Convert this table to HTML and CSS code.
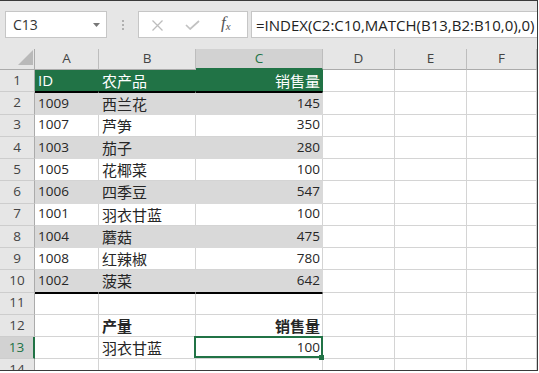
FILE: index.html
```html
<!DOCTYPE html>
<html lang="zh">
<head>
<meta charset="utf-8">
<title>INDEX MATCH</title>
<link rel="stylesheet" href="styles.css">
</head>
<body>
<div class="app">
  <div class="bar">
    <div class="namebox">
      <span class="nb-text">C13</span>
      <svg class="nb-arrow" width="7" height="4" viewBox="0 0 7 4"><path d="M0 0H7L3.5 4Z" fill="#777"/></svg>
    </div>
    <div class="grip"><i></i><i></i><i></i></div>
    <div class="fxbtns">
      <svg class="ic-x" width="11" height="11" viewBox="0 0 11 11"><path d="M0.5 0.5L10.5 10.5M10.5 0.5L0.5 10.5" stroke="#bdbdbd" stroke-width="1.3" fill="none"/></svg>
      <svg class="ic-check" width="15" height="10" viewBox="0 0 15 10"><path d="M1 5L5.2 9L14 1" stroke="#c2c2c2" stroke-width="1.7" fill="none"/></svg>
      <span class="fx"><i>f</i><sub>x</sub></span>
    </div>
    <div class="formula">=INDEX(C2:C10,MATCH(B13,B2:B10,0),0)</div>
  </div>
  <div class="sheet">
    <div class="corner"><svg width="15" height="15" viewBox="0 0 15 15"><path d="M0 15L15 0V15Z" fill="#b9b9b9"/></svg></div>
    <div class="ch">A</div><div class="ch">B</div><div class="ch sel">C</div><div class="ch">D</div><div class="ch">E</div><div class="ch">F</div>

    <div class="rh">1</div><div class="c g bb big">ID</div><div class="c g bb zh">农产品</div><div class="c g bb zh r">销售量</div><div class="c"></div><div class="c"></div><div class="c"></div>
    <div class="rh">2</div><div class="c s tb">1009</div><div class="c s tb zh">西兰花</div><div class="c s tb r">145</div><div class="c"></div><div class="c"></div><div class="c"></div>
    <div class="rh">3</div><div class="c">1007</div><div class="c zh">芦笋</div><div class="c r">350</div><div class="c"></div><div class="c"></div><div class="c"></div>
    <div class="rh">4</div><div class="c s">1003</div><div class="c s zh">茄子</div><div class="c s r">280</div><div class="c"></div><div class="c"></div><div class="c"></div>
    <div class="rh">5</div><div class="c">1005</div><div class="c zh">花椰菜</div><div class="c r">100</div><div class="c"></div><div class="c"></div><div class="c"></div>
    <div class="rh">6</div><div class="c s">1006</div><div class="c s zh">四季豆</div><div class="c s r">547</div><div class="c"></div><div class="c"></div><div class="c"></div>
    <div class="rh">7</div><div class="c">1001</div><div class="c zh">羽衣甘蓝</div><div class="c r">100</div><div class="c"></div><div class="c"></div><div class="c"></div>
    <div class="rh">8</div><div class="c s">1004</div><div class="c s zh">蘑菇</div><div class="c s r">475</div><div class="c"></div><div class="c"></div><div class="c"></div>
    <div class="rh">9</div><div class="c">1008</div><div class="c zh">红辣椒</div><div class="c r">780</div><div class="c"></div><div class="c"></div><div class="c"></div>
    <div class="rh">10</div><div class="c s bb">1002</div><div class="c s bb zh">菠菜</div><div class="c s bb r">642</div><div class="c"></div><div class="c"></div><div class="c"></div>
    <div class="rh">11</div><div class="c tb"></div><div class="c tb"></div><div class="c tb"></div><div class="c"></div><div class="c"></div><div class="c"></div>
    <div class="rh">12</div><div class="c"></div><div class="c zh b">产量</div><div class="c zh b r">销售量</div><div class="c"></div><div class="c"></div><div class="c"></div>
    <div class="rh sel">13</div><div class="c"></div><div class="c zh">羽衣甘蓝</div><div class="c r act">100<span class="sel-box"></span></div><div class="c"></div><div class="c"></div><div class="c"></div>
    <div class="rh">14</div><div class="c"></div><div class="c"></div><div class="c"></div><div class="c"></div><div class="c"></div><div class="c"></div>
  </div>
</div>
</body>
</html>
```
FILE: styles.css
```css
html, body {
  margin: 0;
  padding: 0;
  background: #ffffff;
}

.app {
  box-sizing: border-box;
  width: 538px;
  height: 371px;
  border-top: 1px solid #3a3a3a;
  border-right: 1px solid #3a3a3a;
  border-bottom: 1px solid #3a3a3a;
  overflow: hidden;
  background: #ffffff;
  font-family: "Open Sans", "Noto Sans CJK SC", sans-serif;
}

/* ---------- formula bar ---------- */
.bar {
  height: 48px;
  box-sizing: border-box;
  padding-top: 10px;
  background: #e6e6e6;
  display: flex;
  align-items: flex-start;
}

.namebox {
  box-sizing: border-box;
  margin-left: 5px;
  width: 102px;
  height: 27px;
  background: #ffffff;
  border: 1px solid #c6c6c6;
  display: flex;
  align-items: center;
  justify-content: space-between;
  padding: 0 6px 0 7px;
}

.nb-text {
  font-size: 14px;
  color: #333333;
  line-height: 1;
}

.nb-arrow {
  margin-top: 1px;
}

.grip {
  width: 31px;
  height: 27px;
  display: flex;
  flex-direction: column;
  align-items: center;
  justify-content: center;
  gap: 2px;
  padding-left: 1px;
  box-sizing: border-box;
}

.grip i {
  display: block;
  width: 2px;
  height: 2px;
  background: #b0b0b0;
}

.fxbtns {
  box-sizing: border-box;
  width: 110px;
  height: 27px;
  background: #ffffff;
  border: 1px solid #c6c6c6;
  display: flex;
  align-items: center;
  padding-left: 13px;
}

.ic-x {
  margin-top: 1px;
}

.ic-check {
  margin-left: 22px;
  margin-top: 1px;
}

.fx {
  margin-left: 21px;
  font-family: "Liberation Serif", serif;
  font-size: 17px;
  color: #555555;
  line-height: 1;
  margin-top: -3px;
}

.fx sub {
  font-size: 11px;
  font-style: italic;
  vertical-align: -2px;
}

.formula {
  box-sizing: border-box;
  flex: 1;
  margin-left: 3px;
  height: 27px;
  background: #ffffff;
  border: 1px solid #c6c6c6;
  border-right: none;
  padding-left: 4px;
  display: flex;
  align-items: center;
  font-size: 15px;
  color: #222222;
  white-space: nowrap;
}

/* ---------- sheet ---------- */
.sheet {
  display: grid;
  grid-template-columns: 35px 64px 97px 127px 72px 72px 1fr;
  grid-template-rows: 21px repeat(14, 22.25px);
}

.corner {
  box-sizing: border-box;
  background: #e6e6e6;
  border-right: 1px solid #ababab;
  border-bottom: 1px solid #ababab;
  display: flex;
  justify-content: flex-end;
  align-items: flex-end;
  padding: 0 1px 4px 0;
}

.corner svg {
  display: block;
}

.ch {
  box-sizing: border-box;
  background: #e6e6e6;
  border-right: 1px solid #bdbdbd;
  border-bottom: 1px solid #ababab;
  display: flex;
  align-items: center;
  justify-content: center;
  font-size: 13.5px;
  color: #444444;
  line-height: 1;
}

.ch.sel {
  background: #d2d2d2;
  color: #217346;
  border-bottom: 2px solid #217346;
}

.rh {
  box-sizing: border-box;
  background: #e6e6e6;
  border-right: 1px solid #ababab;
  border-bottom: 1px solid #cdcdcd;
  display: flex;
  align-items: center;
  justify-content: center;
  font-size: 13.5px;
  color: #444444;
  line-height: 1;
}

.rh.sel {
  background: #d2d2d2;
  color: #217346;
  border-right: 2px solid #217346;
}

.c {
  box-sizing: border-box;
  border-right: 1px solid #d4d4d4;
  border-bottom: 1px solid #d4d4d4;
  padding: 0 2px 0 3px;
  display: flex;
  align-items: center;
  font-size: 13.5px;
  line-height: 1;
  color: #262626;
  white-space: nowrap;
  overflow: hidden;
  min-width: 0;
}

.c.big {
  font-size: 15px;
}

.c.zh {
  font-family: "Noto Sans CJK SC", sans-serif;
  font-size: 15px;
}

.c.r {
  justify-content: flex-end;
}

.c.b {
  font-weight: 700;
}

.c.g {
  background: #217346;
  border-color: #217346;
  color: #ffffff;
}

.c.s {
  background: #d9d9d9;
  border-color: #d9d9d9;
}

.c.bb {
  border-bottom-color: #000000;
}

.c.tb {
  border-top: 1px solid #000000;
}

.c.act {
  position: relative;
  overflow: visible;
}

.sel-box {
  position: absolute;
  top: -1px;
  bottom: 0;
  left: -2px;
  right: -1px;
  border: 2px solid #217346;
  z-index: 2;
}

.sel-box::after {
  content: "";
  position: absolute;
  right: -3px;
  bottom: -4px;
  width: 5px;
  height: 5px;
  background: #217346;
}
```
